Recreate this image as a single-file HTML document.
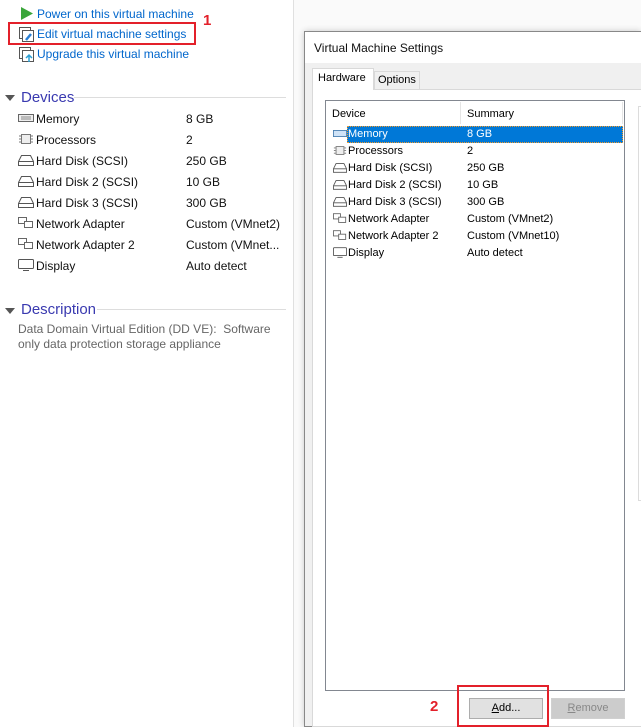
<!DOCTYPE html>
<html><head><meta charset="utf-8"><style>
*{margin:0;padding:0;box-sizing:border-box}
body{width:641px;height:727px;overflow:hidden;background:#fff;font-family:"Liberation Sans",sans-serif;font-size:12px;color:#000;position:relative}
.abs{position:absolute}
.link{color:#0066cc;font-size:12px;white-space:nowrap}
.sec{color:#3a3ab0;font-size:15px}
.row{position:absolute;left:18px;height:20px;font-size:12px;white-space:nowrap;color:#111}
.row .v{position:absolute;left:168px;top:4px}
.row .n{position:absolute;left:18px;top:4px}
.ic{position:absolute;left:0;top:4px;width:16px;height:12px}
.lrow{position:absolute;left:333px;height:17px;font-size:11px;white-space:nowrap;width:290px}
.lrow .n{position:absolute;left:15px;top:2px}
.lrow .v{position:absolute;left:134px;top:2px}
.lic{position:absolute;left:0;top:2px;width:14px;height:11px}
</style></head><body>
<div class="abs" style="left:293px;top:0;width:1px;height:727px;background:#e0e0e0"></div>
<div class="abs" style="left:294px;top:0;width:347px;height:727px;background:#fafafa"></div>

<svg class="abs" style="left:20px;top:6px" width="14" height="15"><polygon points="1,1 13,7.5 1,14" fill="#3aa53a"/></svg>
<div class="abs link" style="left:37px;top:7px">Power on this virtual machine</div>
<svg class="abs" style="left:18px;top:26px" width="17" height="17"><rect x="1.5" y="1.5" width="11" height="11" fill="#fff" stroke="#555"/><rect x="4.5" y="4.5" width="11" height="11" fill="#fff" stroke="#555"/><path d="M8 14 L13 8" stroke="#2a7fd4" stroke-width="2.5"/></svg>
<div class="abs link" style="left:37px;top:27px">Edit virtual machine settings</div>
<div class="abs" style="left:8px;top:22px;width:188px;height:23px;border:2px solid #e3202a"></div>
<div class="abs" style="left:203px;top:12px;color:#e3202a;font-weight:bold;font-size:15px">1</div>
<svg class="abs" style="left:18px;top:46px" width="17" height="17"><rect x="1.5" y="1.5" width="11" height="11" fill="#fff" stroke="#555"/><rect x="4.5" y="4.5" width="11" height="11" fill="#fff" stroke="#555"/><path d="M11 16 V9 M8 12 L11 9 L14 12" stroke="#2a9fd4" stroke-width="1.5" fill="none"/></svg>
<div class="abs link" style="left:37px;top:47px">Upgrade this virtual machine</div>

<svg class="abs" style="left:5px;top:94px" width="10" height="8"><polygon points="0,1 10,1 5,7" fill="#555"/></svg>
<div class="abs sec" style="left:21px;top:89px">Devices</div>
<div class="abs" style="left:74px;top:97px;width:212px;height:1px;background:#ddd"></div>

<div class="row" style="top:108px"><svg class="ic" viewBox="0 0 16 12"><rect x=".5" y="2.5" width="15" height="7" fill="#eee" stroke="#666"/><path d="M3 5h10M3 7h10" stroke="#888"/></svg><span class="n">Memory</span><span class="v">8 GB</span></div>
<div class="row" style="top:129px"><svg class="ic" viewBox="0 0 16 12"><rect x="3.5" y="1.5" width="9" height="9" fill="#eee" stroke="#777"/><path d="M1 3h2M1 6h2M1 9h2M13 3h2M13 6h2M13 9h2" stroke="#777"/></svg><span class="n">Processors</span><span class="v">2</span></div>
<div class="row" style="top:150px"><svg class="ic" viewBox="0 0 16 12"><path d="M3.5 1.5h9l3 6v4h-15v-4z" fill="#fff" stroke="#555"/><path d="M1 7.5h14" stroke="#555"/></svg><span class="n">Hard Disk (SCSI)</span><span class="v">250 GB</span></div>
<div class="row" style="top:171px"><svg class="ic" viewBox="0 0 16 12"><path d="M3.5 1.5h9l3 6v4h-15v-4z" fill="#fff" stroke="#555"/><path d="M1 7.5h14" stroke="#555"/></svg><span class="n">Hard Disk 2 (SCSI)</span><span class="v">10 GB</span></div>
<div class="row" style="top:192px"><svg class="ic" viewBox="0 0 16 12"><path d="M3.5 1.5h9l3 6v4h-15v-4z" fill="#fff" stroke="#555"/><path d="M1 7.5h14" stroke="#555"/></svg><span class="n">Hard Disk 3 (SCSI)</span><span class="v">300 GB</span></div>
<div class="row" style="top:213px"><svg class="ic" viewBox="0 0 16 12"><rect x=".5" y=".5" width="8" height="6" fill="#fff" stroke="#666"/><rect x="6.5" y="4.5" width="8" height="6" fill="#fff" stroke="#666"/></svg><span class="n">Network Adapter</span><span class="v">Custom (VMnet2)</span></div>
<div class="row" style="top:234px"><svg class="ic" viewBox="0 0 16 12"><rect x=".5" y=".5" width="8" height="6" fill="#fff" stroke="#666"/><rect x="6.5" y="4.5" width="8" height="6" fill="#fff" stroke="#666"/></svg><span class="n">Network Adapter 2</span><span class="v">Custom (VMnet...</span></div>
<div class="row" style="top:255px"><svg class="ic" viewBox="0 0 16 12"><rect x=".5" y=".5" width="15" height="9" rx="1" fill="#fff" stroke="#555"/><path d="M5 11.5h6" stroke="#555"/></svg><span class="n">Display</span><span class="v">Auto detect</span></div>

<svg class="abs" style="left:5px;top:307px" width="10" height="8"><polygon points="0,1 10,1 5,7" fill="#555"/></svg>
<div class="abs sec" style="left:21px;top:301px">Description</div>
<div class="abs" style="left:97px;top:309px;width:189px;height:1px;background:#ddd"></div>
<div class="abs" style="left:18px;top:322px;color:#666;font-size:12px;line-height:15px;width:270px">Data Domain Virtual Edition (DD VE):&nbsp; Software only data protection storage appliance</div>

<div class="abs" style="left:304px;top:31px;width:337px;height:696px;border:1px solid #888;border-right:none;background:#f0f0f0;box-shadow:0 0 6px rgba(0,0,0,.2)"></div>
<div class="abs" style="left:305px;top:32px;width:336px;height:31px;background:#fff"></div>
<div class="abs" style="left:314px;top:41px;font-size:12px;color:#111">Virtual Machine Settings</div>
<div class="abs" style="left:312px;top:89px;width:329px;height:638px;border:1px solid #d9d9d9;border-right:none;background:#fff"></div>
<div class="abs" style="left:374px;top:71px;width:46px;height:18px;border:1px solid #d9d9d9;border-bottom:none;background:#f0f0f0"></div>
<div class="abs" style="left:378px;top:74px;font-size:11px">Options</div>
<div class="abs" style="left:312px;top:68px;width:62px;height:22px;border:1px solid #d9d9d9;border-bottom:none;background:#fff"></div>
<div class="abs" style="left:318px;top:72px;font-size:11px">Hardware</div>
<div class="abs" style="left:325px;top:100px;width:300px;height:591px;border:1px solid #828790;background:#fff"></div>
<div class="abs" style="left:460px;top:102px;width:1px;height:22px;background:#e5e5e5"></div>
<div class="abs" style="left:622px;top:102px;width:1px;height:22px;background:#e5e5e5"></div>
<div class="abs" style="left:332px;top:108px;font-size:11px">Device</div>
<div class="abs" style="left:467px;top:108px;font-size:11px">Summary</div>
<div class="abs" style="left:347px;top:126px;width:276px;height:17px;background:#0078d7;border:1px dotted #f39a2a"></div>
<div class="lrow" style="top:126px;color:#fff"><svg class="lic" viewBox="0 0 16 12"><rect x=".5" y="2.5" width="15" height="7" fill="#cfe3f7" stroke="#4a7fb0"/></svg><span class="n">Memory</span><span class="v">8 GB</span></div>
<div class="lrow" style="top:143px"><svg class="lic" viewBox="0 0 16 12"><rect x="3.5" y="1.5" width="9" height="9" fill="#eee" stroke="#777"/><path d="M1 3h2M1 6h2M1 9h2M13 3h2M13 6h2M13 9h2" stroke="#777"/></svg><span class="n">Processors</span><span class="v">2</span></div>
<div class="lrow" style="top:160px"><svg class="lic" viewBox="0 0 16 12"><path d="M3.5 1.5h9l3 6v4h-15v-4z" fill="#fff" stroke="#555"/><path d="M1 7.5h14" stroke="#555"/></svg><span class="n">Hard Disk (SCSI)</span><span class="v">250 GB</span></div>
<div class="lrow" style="top:177px"><svg class="lic" viewBox="0 0 16 12"><path d="M3.5 1.5h9l3 6v4h-15v-4z" fill="#fff" stroke="#555"/><path d="M1 7.5h14" stroke="#555"/></svg><span class="n">Hard Disk 2 (SCSI)</span><span class="v">10 GB</span></div>
<div class="lrow" style="top:194px"><svg class="lic" viewBox="0 0 16 12"><path d="M3.5 1.5h9l3 6v4h-15v-4z" fill="#fff" stroke="#555"/><path d="M1 7.5h14" stroke="#555"/></svg><span class="n">Hard Disk 3 (SCSI)</span><span class="v">300 GB</span></div>
<div class="lrow" style="top:211px"><svg class="lic" viewBox="0 0 16 12"><rect x=".5" y=".5" width="8" height="6" fill="#fff" stroke="#666"/><rect x="6.5" y="4.5" width="8" height="6" fill="#fff" stroke="#666"/></svg><span class="n">Network Adapter</span><span class="v">Custom (VMnet2)</span></div>
<div class="lrow" style="top:228px"><svg class="lic" viewBox="0 0 16 12"><rect x=".5" y=".5" width="8" height="6" fill="#fff" stroke="#666"/><rect x="6.5" y="4.5" width="8" height="6" fill="#fff" stroke="#666"/></svg><span class="n">Network Adapter 2</span><span class="v">Custom (VMnet10)</span></div>
<div class="lrow" style="top:245px"><svg class="lic" viewBox="0 0 16 12"><rect x=".5" y=".5" width="15" height="9" rx="1" fill="#fff" stroke="#555"/><path d="M5 11.5h6" stroke="#555"/></svg><span class="n">Display</span><span class="v">Auto detect</span></div>
<div class="abs" style="left:638px;top:106px;width:10px;height:395px;border:1px solid #dcdcdc"></div>
<div class="abs" style="left:469px;top:698px;width:74px;height:21px;border:1px solid #adadad;background:#e1e1e1;font-size:11px;text-align:center;line-height:19px"><u>A</u>dd...</div>
<div class="abs" style="left:551px;top:698px;width:74px;height:21px;border:1px solid #d0d0d0;background:#ccc;color:#888;font-size:11px;text-align:center;line-height:19px"><u>R</u>emove</div>
<div class="abs" style="left:457px;top:685px;width:92px;height:42px;border:2px solid #e3202a"></div>
<div class="abs" style="left:430px;top:698px;color:#e3202a;font-weight:bold;font-size:15px">2</div>
</body></html>
